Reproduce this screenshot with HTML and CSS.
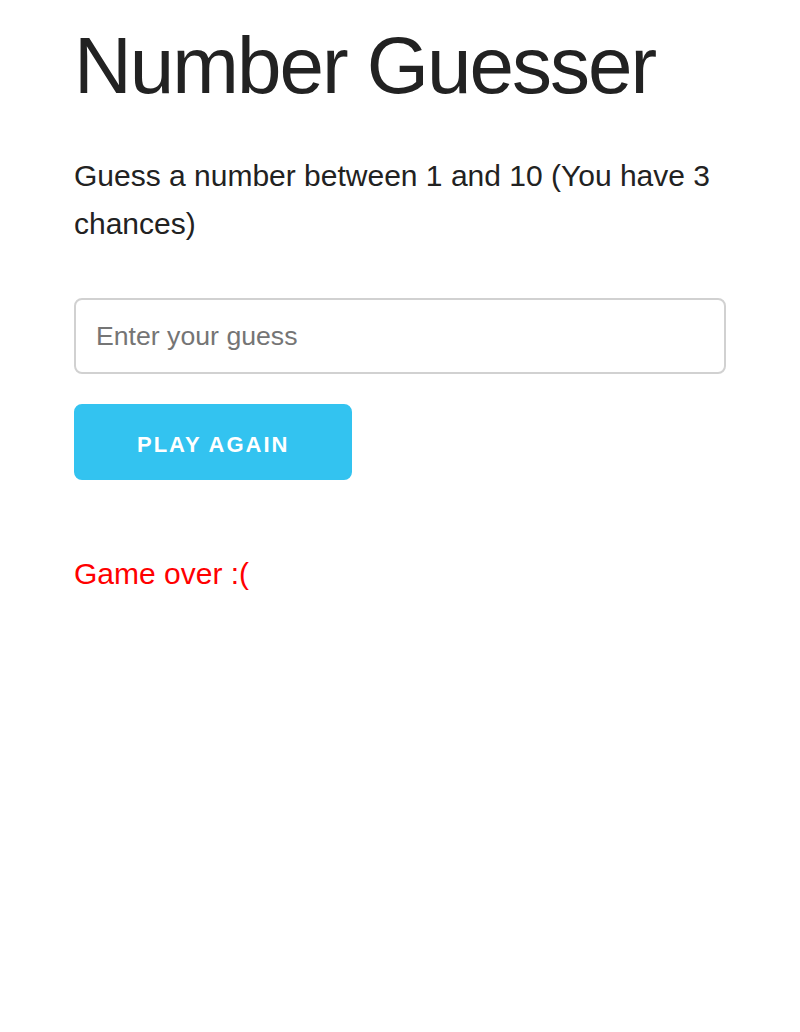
FILE: index.html
```html
<!DOCTYPE html>
<html lang="en">
<head>
<meta charset="utf-8">
<title>Number Guesser</title>
<link rel="stylesheet" href="styles.css">
</head>
<body>
<div class="container">
  <h1 class="title">Number Guesser</h1>
  <p class="intro">Guess a number between 1 and 10 (You have 3 chances)</p>
  <form class="guess-form">
    <input class="guess-input" type="number" placeholder="Enter your guess">
    <button class="guess-btn" type="button">Play Again</button>
  </form>
  <p class="message">Game over :(</p>
</div>
</body>
</html>
```

FILE: styles.css
```css
html, body {
  margin: 0;
  padding: 0;
  background: #fff;
}
body {
  font-family: "Liberation Sans", Arial, sans-serif;
  color: #222;
  font-size: 30px;
  line-height: 1.6;
}
.container {
  padding: 18px 74px 0;
}
.title {
  margin: 0 0 38px;
  font-size: 80px;
  font-weight: 300;
  line-height: 1.2;
  letter-spacing: -2px;
}
.intro {
  margin: 0 0 50px;
}
.guess-form {
  display: flex;
  flex-direction: column;
  align-items: flex-start;
}
.guess-input {
  box-sizing: border-box;
  width: 100%;
  height: 76px;
  padding: 12px 20px;
  border: 2px solid #d1d1d1;
  border-radius: 8px;
  font-family: "Liberation Sans", Arial, sans-serif;
  font-size: 26.67px;
  color: #222;
  background: #fff;
  margin: 0 0 30px;
  outline: none;
}
.guess-input::placeholder {
  color: #757575;
}
.guess-btn {
  box-sizing: border-box;
  height: 76px;
  padding: 6px 61px 0;
  border: 2px solid #33c3f0;
  border-radius: 8px;
  background: #33c3f0;
  color: #fff;
  font-family: "Liberation Sans", Arial, sans-serif;
  font-size: 22px;
  font-weight: 700;
  letter-spacing: 2px;
  text-transform: uppercase;
  line-height: 1;
  cursor: pointer;
}
.message {
  margin: 70px 0 0;
  color: red;
}
```
